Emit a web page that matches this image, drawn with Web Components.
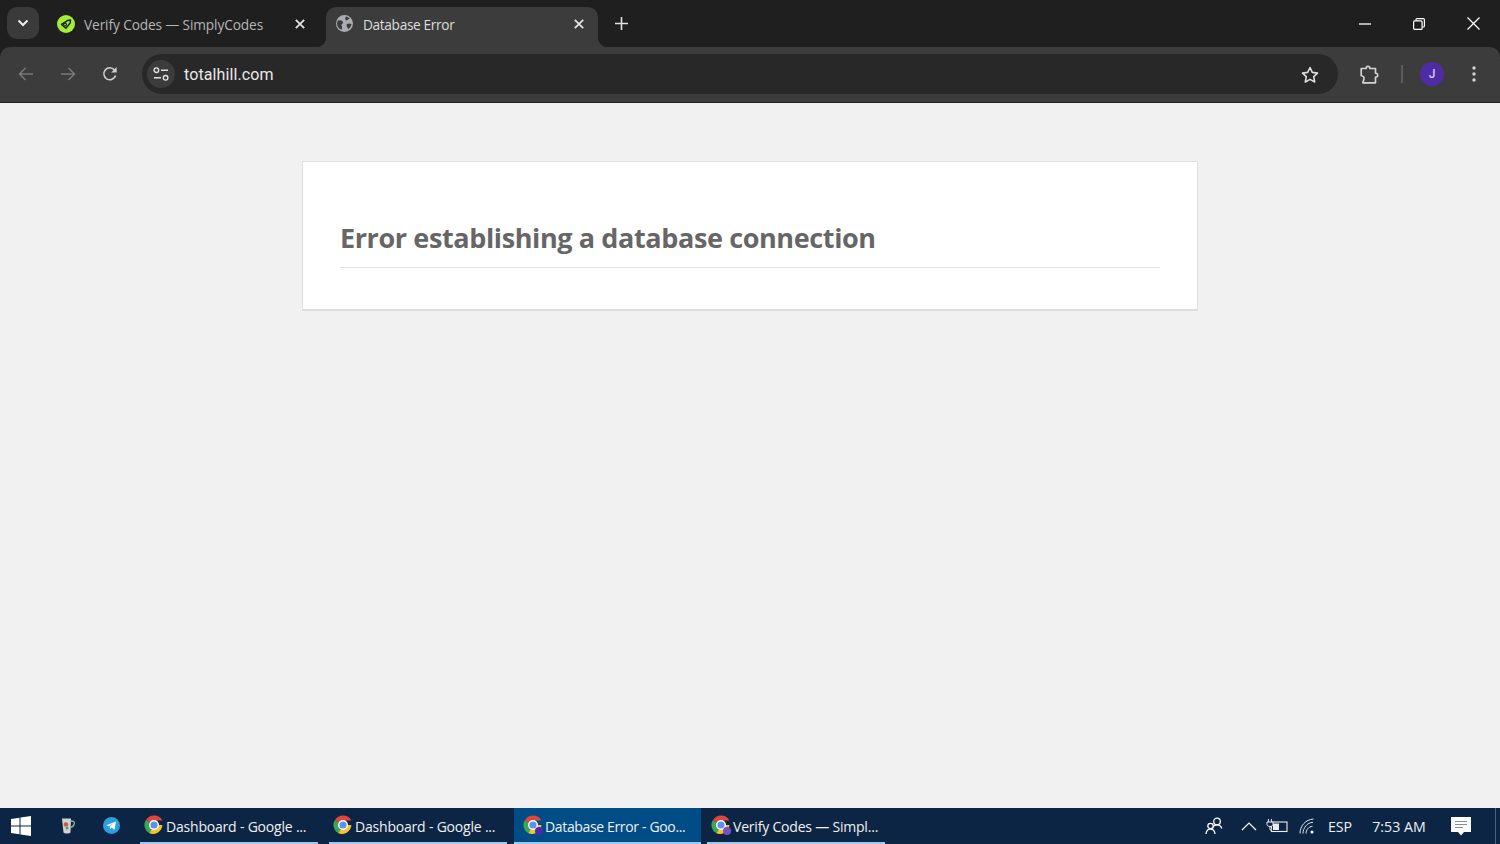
<!DOCTYPE html>
<html lang="en">
<head>
<meta charset="utf-8">
<title>Database Error</title>
<style>
  html, body { margin: 0; height: 100%; overflow: hidden; }
  body {
    display: flex;
    flex-direction: column;
    height: 844px;
    background: #f1f1f1;
    font-family: "Open Sans", "Liberation Sans", sans-serif;
  }
  error-page { flex: 1; }
</style>
</head>
<body>
<tab-strip>
  <browser-tab title-text="Verify Codes — SimplyCodes" icon="simply"></browser-tab>
  <browser-tab title-text="Database Error" icon="globe" active></browser-tab>
</tab-strip>
<nav-toolbar url="totalhill.com"></nav-toolbar>
<error-page>Error establishing a database connection</error-page>
<task-bar>
  <task-button label="Dashboard - Google ..." width="178"></task-button>
  <task-button label="Dashboard - Google ..." width="178" gap="11"></task-button>
  <task-button label="Database Error - Goo..." width="187" gap="7" badge="#4a2aa8" active></task-button>
  <task-button label="Verify Codes — Simpl..." width="178" gap="6" badge="#7a4fc0"></task-button>
</task-bar>

<script>
const ICONS = {
  simply: `<svg width="18" height="18" viewBox="0 0 18 18"><circle cx="9" cy="9" r="9" fill="#a4ec3c"/><path d="M4.500 9.500 10.500 5.600l3-.6-.3 3-4.400 5.200z" fill="none" stroke="#1d2b12" stroke-width="1.500" stroke-linejoin="round"/><circle cx="8" cy="9.600" r="1.400" fill="none" stroke="#1d2b12" stroke-width="1.200"/></svg>`,
  globe: `<svg width="17" height="17" viewBox="0 0 17 17"><circle cx="8.500" cy="8.500" r="8.500" fill="#a9acb2"/><path d="M2 5.500c2-.6 3.400-.2 4.500.8 1 1 .6 2.200-.4 2.700-.8.400-.8 1.600-.2 2.400.4.600.2 2.300-.4 3.400C3 13.800 1 11.500 1 8.500c0-1 .4-2.100 1-3zM10 1.500c1.200.2 2.800 1 3.800 2.300-1 .6-1.800.4-2.500 1.200-.6.800-1.300.4-1.800-.2-.6-.8-.3-2.300.5-3.300zM11 9c1.500-.8 3.300-.6 4.500 0-.2 2-1.400 3.900-3 5.100-.8-.6-1.100-1.700-1.500-2.600-.4-.9-.8-1.900 0-2.500z" fill="#3c3c3c"/></svg>`,
  chrome: `<svg width="20" height="20" viewBox="0 0 20 20"><path d="M10 10 1.800 5.200A9.500 9.500 0 0 1 18.400 5.500H10z" fill="#e0463a"/><path d="M10 10 5.300 18.300A9.500 9.500 0 0 1 1.800 5.200z" fill="#3aa757"/><path d="M10 10h8.400A9.500 9.500 0 0 1 5.300 18.300z" fill="#f5c22e"/><circle cx="10" cy="10" r="5" fill="#fff"/><circle cx="10" cy="10" r="3.600" fill="#5a93ee"/></svg>`
};

// one tab of the browser strip
class BrowserTab extends HTMLElement {
  connectedCallback() {
    const active = this.hasAttribute("active");
    this.attachShadow({ mode: "open" });
    this.shadowRoot.innerHTML = `
      <style>
        :host {
          position: relative;
          display: flex;
          align-items: center;
          box-sizing: border-box;
          width: 272px;
          height: 40px;
          padding: 0 10px 6px 10px;
          border-radius: 10px 10px 0 0;
          background: ${active ? "#3c3c3c" : "transparent"};
          font-family: "Open Sans", "Liberation Sans", sans-serif;
          font-size: 13.700px;
          color: ${active ? "#dedede" : "#b6b6b6"};
        }
        .icon { width: 18px; height: 18px; display: flex; margin-right: 9px; }
        .label { flex: 1; white-space: nowrap; letter-spacing: ${active ? "-.35px" : "-.11px"}; }
        svg.x { margin-right: 4px; }
        :host([active])::before, :host([active])::after {
          content: "";
          position: absolute;
          bottom: 0;
          width: 10px;
          height: 10px;
        }
        :host([active])::before { left: -10px; background: radial-gradient(circle at 0 0, transparent 10px, #3c3c3c 10.500px); }
        :host([active])::after { right: -10px; background: radial-gradient(circle at 100% 0, transparent 10px, #3c3c3c 10.500px); }
      </style>
      <span class="icon">${ICONS[this.getAttribute("icon")]}</span>
      <span class="label">${this.getAttribute("title-text")}</span>
      <svg class="x" width="10" height="10" viewBox="0 0 10 10"><path d="M.8.8l8.400 8.400M9.200.8.800 9.200" stroke="#e6e6e6" stroke-width="1.700"/></svg>
    `;
  }
}
customElements.define("browser-tab", BrowserTab);

class TabStrip extends HTMLElement {
  constructor() {
    super();
    this.attachShadow({ mode: "open" });
    this.shadowRoot.innerHTML = `
      <style>
        :host {
          display: flex;
          align-items: flex-start;
          box-sizing: border-box;
          height: 47px;
          padding: 7px 0 0 7px;
          background: #1f1f1f;
        }
        .search {
          width: 32px; height: 32px;
          border-radius: 10px;
          background: #3a3a3a;
          display: flex; align-items: center; justify-content: center;
          margin-right: 8px;
        }
        .tabs { display: flex; gap: 7px; }
        .add { width: 32px; height: 32px; margin-left: 7px; display: flex; align-items: center; justify-content: center; }
        .win { margin-left: auto; display: flex; margin-top: -7px; }
        .win span { width: 54px; height: 47px; display: flex; align-items: center; justify-content: center; }
      </style>
      <div class="search"><svg width="12" height="8" viewBox="0 0 12 8"><path d="M1.500 1.500 6 6l4.500-4.500" fill="none" stroke="#eee" stroke-width="2"/></svg></div>
      <div class="tabs"><slot></slot></div>
      <div class="add"><svg width="13" height="13" viewBox="0 0 13 13"><path d="M6.500 0v13M0 6.500h13" stroke="#e2e2e2" stroke-width="1.600"/></svg></div>
      <div class="win">
        <span><svg width="12" height="2" viewBox="0 0 12 2"><path d="M0 1h12" stroke="#fff" stroke-width="1.300"/></svg></span>
        <span><svg width="12" height="12" viewBox="0 0 12 12"><rect x=".6" y="2.900" width="8.500" height="8.500" rx="1" fill="none" stroke="#fff" stroke-width="1.200"/><path d="M3 2.800V1.700C3 1 3.500.6 4.100.6h6.200c.6 0 1.100.5 1.100 1.100v6.200c0 .6-.4 1.100-1.100 1.100H9.200" fill="none" stroke="#fff" stroke-width="1.200"/></svg></span>
        <span><svg width="13" height="13" viewBox="0 0 13 13"><path d="M.5.500l12 12M12.500.500l-12 12" stroke="#fff" stroke-width="1.300"/></svg></span>
      </div>
    `;
  }
}
customElements.define("tab-strip", TabStrip);

class NavToolbar extends HTMLElement {
  connectedCallback() {
    this.attachShadow({ mode: "open" });
    this.shadowRoot.innerHTML = `
      <style>
        :host {
          display: block;
          background: #1f1f1f;
        }
        .bar {
          display: flex;
          align-items: center;
          box-sizing: border-box;
          height: 56px;
          padding: 0 14px 1px 14px;
          background: #3c3c3c;
          border-radius: 10px 10px 0 0;
          border-bottom: 1px solid #222;
        }
        .nav { width: 24px; height: 24px; display: flex; align-items: center; justify-content: center; margin-right: 18px; }
        .omni {
          flex: 1;
          margin-left: 2px;
          height: 40px;
          border-radius: 20px;
          background: #282828;
          display: flex;
          align-items: center;
          padding: 0 19px 0 5px;
          margin-right: 20px;
        }
        .tune { width: 28px; height: 28px; border-radius: 50%; background: #3c3c3c; display: flex; align-items: center; justify-content: center; margin-right: 9px; }
        .url { flex: 1; font: 400 16px Roboto, "Liberation Sans", sans-serif; letter-spacing: .1px; color: #e8e8e8; }
        .ext { width: 24px; display: flex; justify-content: center; }
        .sep { width: 1.500px; height: 18px; background: #5c5c5c; margin: 0 17.500px 0 19px; }
        .avatar {
          width: 24px; height: 24px; border-radius: 50%;
          background: #4f2ba6; color: #dcc8f7;
          font: 500 12px Roboto, "Liberation Sans", sans-serif;
          display: flex; align-items: center; justify-content: center;
        }
        .menu { display: flex; margin: 0 0 0 18px; width: 24px; justify-content: center; }
      </style>
      <div class="bar">
        <span class="nav"><svg width="16" height="14" viewBox="0 0 16 14"><path d="M15 7H1.800M7.500 1 1.500 7l6 6" fill="none" stroke="#777" stroke-width="1.600"/></svg></span>
        <span class="nav"><svg width="16" height="14" viewBox="0 0 16 14"><path d="M1 7h13.200M8.500 1l6 6-6 6" fill="none" stroke="#777" stroke-width="1.600"/></svg></span>
        <span class="nav"><svg width="16" height="16" viewBox="0 0 16 16"><path d="M13.600 9.500A6 6 0 1 1 12.500 4L14 5.500" fill="none" stroke="#d0d0d0" stroke-width="1.600"/><path d="M14.600 1v5.400H9.200z" fill="#d0d0d0"/></svg></span>
        <div class="omni">
          <span class="tune"><svg width="16" height="14" viewBox="0 0 16 14"><circle cx="3.400" cy="3.200" r="2.300" fill="none" stroke="#e0e0e0" stroke-width="1.400"/><path d="M8 3.200h7M1 10.800h7" stroke="#e0e0e0" stroke-width="1.400"/><circle cx="12.600" cy="10.800" r="2.300" fill="none" stroke="#e0e0e0" stroke-width="1.400"/></svg></span>
          <span class="url">${this.getAttribute("url")}</span>
          <svg width="18" height="17" viewBox="0 0 18 17"><path d="M9 1.500l2.300 4.900 5.200.7-3.800 3.600 1 5.300L9 13.400l-4.700 2.600 1-5.300-3.800-3.600 5.200-.7z" fill="none" stroke="#dcdcdc" stroke-width="1.600" stroke-linejoin="round"/></svg>
        </div>
        <span class="ext"><svg width="22" height="22" viewBox="0 0 20 20"><path d="M2 5h4.500c-.3-2.600 3.700-2.600 3.400 0H15v4.300c2.700-.3 2.700 3.900 0 3.600V18H3.500l1-3.400c.3-1.800-.6-2.800-2.500-3z" fill="none" stroke="#d4d4d4" stroke-width="1.500" stroke-linejoin="round"/></svg></span>
        <span class="sep"></span>
        <span class="avatar">J</span>
        <span class="menu"><svg width="4" height="16" viewBox="0 0 4 16"><circle cx="2" cy="2" r="1.700" fill="#d4d4d4"/><circle cx="2" cy="8" r="1.700" fill="#d4d4d4"/><circle cx="2" cy="14" r="1.700" fill="#d4d4d4"/></svg></span>
      </div>
    `;
  }
}
customElements.define("nav-toolbar", NavToolbar);

// the WordPress style error box
class ErrorPage extends HTMLElement {
  constructor() {
    super();
    this.attachShadow({ mode: "open" });
    this.shadowRoot.innerHTML = `
      <style>
        :host { display: block; box-sizing: border-box; padding-top: 58px; }
        .card {
          box-sizing: border-box;
          width: 896px;
          height: 150px;
          margin: 0 auto;
          padding: 0 37px;
          background: #fff;
          border: 1px solid #dfdfdf;
          border-bottom: 2px solid #dcdcdc;
        }
        h1 {
          margin: 54px 0 0;
          padding-bottom: 8px;
          font: 700 27px/43px "Open Sans", "Liberation Sans", sans-serif;
          letter-spacing: -.38px;
          color: #666;
          border-bottom: 1px solid #e4e4e4;
        }
      </style>
      <div class="card"><h1><slot></slot></h1></div>
    `;
  }
}
customElements.define("error-page", ErrorPage);

class TaskButton extends HTMLElement {
  connectedCallback() {
    const active = this.hasAttribute("active");
    const badge = this.getAttribute("badge");
    this.attachShadow({ mode: "open" });
    this.shadowRoot.innerHTML = `
      <style>
        :host {
          display: flex;
          align-items: center;
          box-sizing: border-box;
          position: relative;
          height: 36px;
          width: ${this.getAttribute("width")}px;
          margin-left: ${this.getAttribute("gap") || 0}px;
          padding: 2px 0 0 ${active ? 9 : 4}px;
          background: ${active ? "#004c87" : "transparent"};
          border-bottom: 2px solid #9cc8ec;
          color: #f0f0f0;
          font: 14px "Open Sans", "Liberation Sans", sans-serif;
          letter-spacing: ${active ? "-.35px" : "-.2px"};
          white-space: nowrap;
        }
        .ic { position: relative; width: 20px; height: 20px; margin: -2px 2px 0 0; display: flex; }
        .badge { position: absolute; right: 0; bottom: 0; width: 8px; height: 8px; border-radius: 50%; }
      </style>
      <span class="ic">${ICONS.chrome}${badge ? `<span class="badge" style="background:${badge}"></span>` : ""}</span>
      <span>${this.getAttribute("label")}</span>
    `;
  }
}
customElements.define("task-button", TaskButton);

class TaskBar extends HTMLElement {
  constructor() {
    super();
    this.attachShadow({ mode: "open" });
    this.shadowRoot.innerHTML = `
      <style>
        :host {
          display: flex;
          align-items: center;
          box-sizing: border-box;
          height: 36px;
          background: #0c2545;
          color: #eef2f6;
          font: 14.200px "Open Sans", "Liberation Sans", sans-serif;
        }
        .start { width: 42px; display: flex; justify-content: center; }
        .pin { width: 46px; display: flex; justify-content: center; }
        .pins { display: flex; width: 98px; }
        .tray { margin-left: auto; display: flex; align-items: center; height: 100%; }
        .tray > * { display: flex; justify-content: center; align-items: center; }
        .line { width: 1px; height: 100%; background: #4c6078; }
      </style>
      <span class="start"><svg width="20" height="20" viewBox="0 0 20 20"><path d="M0 3l8.500-1.200v7.700H0zM9.500 1.600 20 0v9.500H9.500zM0 10.500h8.500v7.700L0 17zM9.500 10.500H20V20L9.500 18.400z" fill="#fff"/></svg></span>
      <span class="pins">
        <span class="pin" style="margin-left:3px"><svg width="18" height="18" viewBox="0 0 18 18"><path d="M3 1.500h9l-.5 14c-1.500 1.300-5.500 1.300-7 0z" fill="#cfd4cf"/><path d="M11.800 4c3 0 4 1 3.500 3-.4 1.500-2 3-3.800 3.500" fill="none" stroke="#9aa39c" stroke-width="1.400"/><circle cx="7" cy="7.500" r="2.300" fill="#c9574c"/><circle cx="8" cy="11" r="1.500" fill="#5a9a60"/></svg></span>
        <span class="pin" style="width:40px"><svg width="17" height="17" viewBox="0 0 17 17"><circle cx="8.500" cy="8.500" r="8.500" fill="#2d9fdc"/><path d="M3.300 8.300l9.700-3.900-1.500 8.300-2.900-2.100-1.500 1.500-.3-2.500 4.300-3.600-5.400 3.200z" fill="#fff"/></svg></span>
      </span>
      <slot></slot>
      <div class="tray">
        <span style="width:20px"><svg width="20" height="20" viewBox="0 0 20 20"><circle cx="13" cy="5.500" r="3.300" fill="none" stroke="#fff" stroke-width="1.300"/><path d="M8.500 12c.8-2.400 2.500-3.200 4.500-3.200 2.300 0 4 1.300 4.800 3.700" fill="none" stroke="#fff" stroke-width="1.300"/><circle cx="6.500" cy="10" r="2.700" fill="#0c2545" stroke="#fff" stroke-width="1.300"/><path d="M2 18c.3-3 2-4.800 4.500-4.800S10.700 15 11 18" fill="none" stroke="#fff" stroke-width="1.300"/></svg></span>
        <span style="width:16px;margin-left:17px"><svg width="16" height="9" viewBox="0 0 16 9"><path d="M1 8l7-7 7 7" fill="none" stroke="#fff" stroke-width="1.200"/></svg></span>
        <span style="width:22px;margin-left:9px"><svg width="22" height="14" viewBox="0 0 22 14"><rect x="5.500" y="3" width="15.500" height="9.500" fill="none" stroke="#eee" stroke-width="1.100"/><rect x="7" y="4.500" width="6" height="6.500" fill="#eee"/><path d="M2.400 0v3M5.400 0v3M1 3h6v2.500c0 1.300-1.300 2-3 2s-3-.7-3-2zM4 7.500V11h2" fill="#0c2545" stroke="#eee" stroke-width="1"/></svg></span>
        <span style="width:16px;margin-left:11px"><svg width="16" height="16" viewBox="0 0 16 16"><g fill="none" stroke="#dfe5ec" stroke-width="1"><path d="M1 15.500C1 8 6.500 1.500 14.500 1"/><path d="M4 15.500C4 10 8 4.500 14 4.300"/><path d="M7 15.500c0-3.600 2.500-7 6.500-7.200"/></g><circle cx="13" cy="14" r="1.500" fill="#fff"/></svg></span>
        <span style="width:40px;margin-left:5px">ESP</span>
        <span style="width:70px;margin-left:4px">7:53 AM</span>
        <span style="width:20px;margin-left:17px"><svg width="20" height="19" viewBox="0 0 20 19"><path d="M0 0h20v15h-7l-3 3.500L7 15H0z" fill="#fff"/><path d="M4 4.500h12M4 7.500h12M4 10.500h8" stroke="#7f8ea0" stroke-width="1.200"/></svg></span>
        <span class="line" style="margin-left:24px"></span>
        <span style="width:4px"></span>
      </div>
    `;
  }
}
customElements.define("task-bar", TaskBar);
</script>
</body>
</html>
